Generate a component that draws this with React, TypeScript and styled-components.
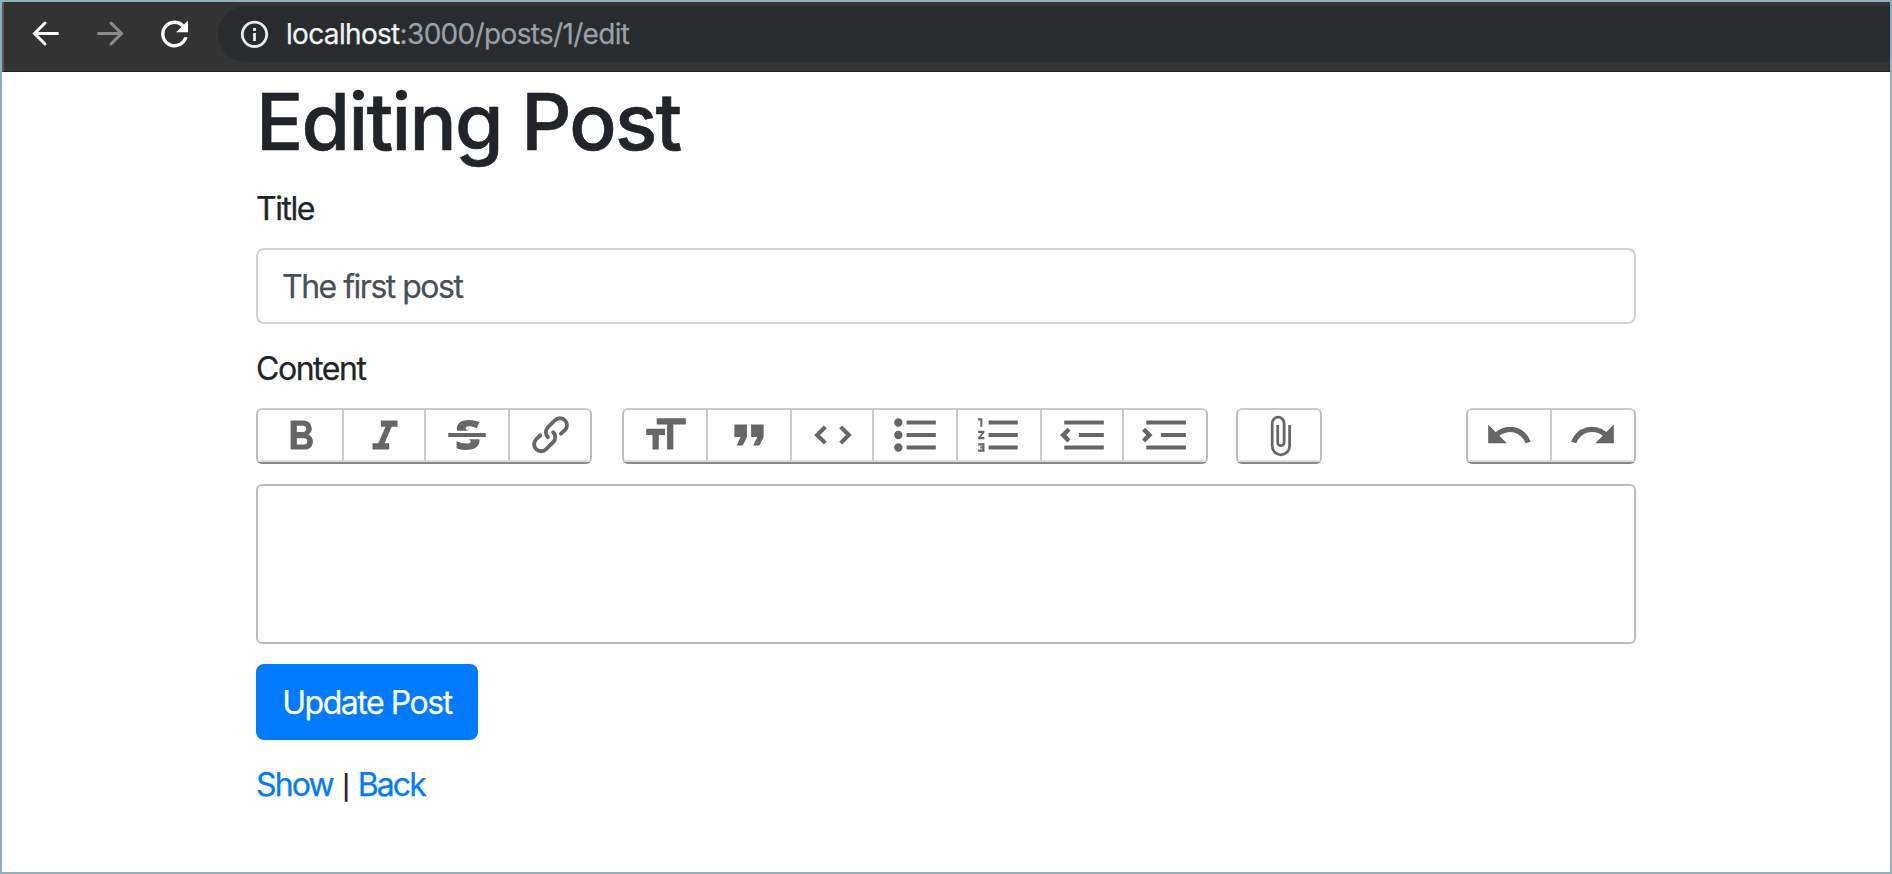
import React from 'react';
import styled, { createGlobalStyle } from 'styled-components';

const GlobalStyle = createGlobalStyle`
  *, *::before, *::after { box-sizing: border-box; }
  body {
    margin: 0;
    background: #fff;
    color: #212529;
    font-family: Inter, "Liberation Sans", sans-serif;
    font-size: 32px;
    font-weight: 400;
    line-height: 48px;
    -webkit-text-stroke: 0.25px;
  }
`;

const Window = styled.div`
  width: 1892px;
  height: 874px;
  border: 2px solid #90b0bf;
  background: #fff;
  overflow: hidden;
`;

const BrowserBar = styled.header`
  display: flex;
  align-items: flex-start;
  height: 70px;
  padding: 4px 0 0 22px;
  background: #333;
  border-left: 2px solid #5a5a5a;
  border-bottom: 1px solid #231f20;
`;

const NavIcon = styled.svg<{ $dim?: boolean }>`
  flex: none;
  width: 40px;
  height: 56px;
  margin-right: 24px;
  fill: none;
  stroke: ${p => (p.$dim ? '#8b8b8b' : '#fff')};
  stroke-width: 3;
  stroke-linecap: round;
`;

const AddressBar = styled.div`
  display: flex;
  flex: 1;
  align-items: center;
  height: 56px;
  padding-left: 22px;
  background: #292c2f;
  border-radius: 28px 0 0 28px;
`;

const InfoIcon = styled.svg`
  width: 30px;
  height: 30px;
  margin-right: 16px;
  fill: none;
  stroke: #e8eaed;
  stroke-width: 2.8;
`;

const Url = styled.span`
  color: #9aa0a6;
  font-size: 28px;
  line-height: 40px;
  letter-spacing: -0.67px;
  white-space: pre;
`;

const Host = styled.span`
  color: #f1f3f4;
`;

const Page = styled.main`
  width: 1380px;
  margin: 0 auto;
`;

const Heading = styled.h1`
  margin: 0;
  padding-top: 2px;
  font-size: 78.5px;
  font-weight: 500;
  line-height: 96px;
  letter-spacing: -1.72px;
  -webkit-text-stroke: 0.6px;
`;

const Label = styled.label<{ $top: number }>`
  display: block;
  height: 48px;
  margin: ${p => p.$top}px 0 15px;
  letter-spacing: -1.45px;
`;

const TextInput = styled.input`
  display: block;
  width: 100%;
  height: 76px;
  padding: 1px 24px 0;
  border: 2px solid #ced4da;
  border-radius: 8px;
  background: #fff;
  color: #495057;
  font: inherit;
  letter-spacing: -1.5px;
  outline: none;
`;

const Toolbar = styled.div`
  display: flex;
  height: 56px;
  margin-bottom: 20px;
`;

const Group = styled.div<{ $gap?: number }>`
  display: flex;
  margin-right: ${p => p.$gap ?? 0}px;
  border: 2px solid #bbb;
  border-top-color: #ccc;
  border-bottom-color: #888;
  border-radius: 6px;
`;

const Spacer = styled.div`
  flex: 1;
`;

const ToolButton = styled.button<{ $width: number; $inset?: number }>`
  display: flex;
  align-items: center;
  justify-content: center;
  width: ${p => p.$width}px;
  height: 52px;
  padding: 0 0 0 ${p => p.$inset ?? 0}px;
  border: 0;
  border-bottom: 2px solid #ddd;
  background: transparent;

  & + & {
    border-left: 2px solid #ccc;
  }
`;

const Glyph = styled.svg<{ $attach?: boolean }>`
  width: 50px;
  height: ${p => (p.$attach ? 44 : 50)}px;
  margin-top: ${p => (p.$attach ? 2 : 0)}px;
  fill: #666;
`;

const Editor = styled.div`
  height: 160px;
  margin-bottom: 20px;
  border: 2px solid #bbb;
  border-radius: 6px;
`;

const Submit = styled.button`
  display: block;
  width: 222px;
  height: 76px;
  padding: 2px 0 0;
  border: 0;
  border-radius: 8px;
  background: #007bff;
  color: #fff;
  font: inherit;
  letter-spacing: -1.45px;
`;

const Links = styled.nav`
  margin-top: 21px;
  letter-spacing: -1.85px;
`;

const Link = styled.a`
  color: #007bff;
  text-decoration: none;
`;

const Divider = styled.span`
  margin: 0 2px 0 2px;
  font-size: 24px;
  font-weight: 500;
  line-height: 1;
`;

type Tool = { name: string; width: number; inset?: number; path: string };

const textTools: Tool[] = [
  { name: 'Bold', width: 84, inset: 2, path: 'M15.6 11.8c1-.7 1.6-1.8 1.6-2.8a4 4 0 0 0-4-4H7v14h7c2.1 0 3.7-1.7 3.7-3.8 0-1.5-.8-2.8-2.1-3.4zM10 7.5h3a1.5 1.5 0 1 1 0 3h-3v-3zm3.5 9H10v-3h3.5a1.5 1.5 0 1 1 0 3z' },
  { name: 'Italic', width: 82, inset: 2, path: 'M10 5v3h2.2l-3.4 8H6v3h8v-3h-2.2l3.4-8H18V5h-8z' },
  { name: 'Strikethrough', width: 84, path: 'M12.73 14l.28.14c.26.15.45.3.57.44.12.14.18.3.18.5 0 .3-.15.56-.44.75-.3.2-.76.3-1.39.3A13.52 13.52 0 0 1 7 14.95v3.37a10.64 10.64 0 0 0 4.84.88c1.26 0 2.35-.19 3.28-.56.93-.37 1.64-.9 2.14-1.57s.74-1.45.74-2.32c0-.26-.02-.51-.06-.75h-5.21zm-5.5-4c-.08-.34-.12-.7-.12-1.1 0-1.29.52-2.3 1.58-3.02 1.05-.72 2.5-1.08 4.34-1.08 1.62 0 3.28.34 4.97 1l-1.3 2.93c-1.47-.6-2.73-.9-3.8-.9-.55 0-.96.08-1.2.26-.26.17-.38.38-.38.64 0 .27.16.52.48.74.17.12.53.3 1.05.53H7.23zM3 13h18v-2H3v2z' },
  { name: 'Link', width: 82, inset: 2, path: 'M9.88 13.7a4.3 4.3 0 0 1 0-6.07l3.37-3.37a4.26 4.26 0 0 1 6.07 0 4.3 4.3 0 0 1 0 6.06l-1.96 1.72a.91.91 0 1 1-1.3-1.3l1.97-1.71a2.46 2.46 0 0 0-3.48-3.48l-3.38 3.37a2.46 2.46 0 0 0 0 3.48.91.91 0 1 1-1.3 1.3zM4.25 19.46a4.3 4.3 0 0 1 0-6.07l1.93-1.9a.91.91 0 1 1 1.3 1.3l-1.93 1.9a2.46 2.46 0 0 0 3.48 3.48l3.37-3.38c.96-.96.96-2.52 0-3.48a.91.91 0 1 1 1.3-1.3 4.3 4.3 0 0 1 0 6.07l-3.38 3.38a4.26 4.26 0 0 1-6.07 0z' },
];

const blockTools: Tool[] = [
  { name: 'Heading', width: 82, path: 'M12 9v3H9v7H6v-7H3V9h9zM8 4h14v3h-6v12h-3V7H8V4z' },
  { name: 'Quote', width: 84, path: 'M6 17h3l2-4V7H5v6h3zm8 0h3l2-4V7h-6v6h3z' },
  { name: 'Code', width: 82, inset: 2, path: 'M18.2 12L15 15.2l1.4 1.4L21 12l-4.6-4.6L15 8.8l3.2 3.2zM5.8 12L9 8.8 7.6 7.4 3 12l4.6 4.6L9 15.2 5.8 12z' },
  { name: 'Bullets', width: 84, path: 'M4 4a2 2 0 1 0 0 4 2 2 0 0 0 0-4zm0 6a2 2 0 1 0 0 4 2 2 0 0 0 0-4zm0 6a2 2 0 1 0 0 4 2 2 0 0 0 0-4zm4 3h14v-2H8v2zm0-6h14v-2H8v2zm0-8v2h14V5H8z' },
  { name: 'Numbers', width: 84, path: 'M2 17h2v.5H3v1h1v.5H2v1h3v-4H2v1zm1-9h1V4H2v1h1v3zm-1 3h1.8L2 13.1v.9h3v-1H3.2L5 10.9V10H2v1zm5-6v2h14V5H7zm0 14h14v-2H7v2zm0-6h14v-2H7v2z' },
  { name: 'Decrease level', width: 82, inset: 2, path: 'M3 19h19v-2H3v2zm7-6h12v-2H10v2zm-8.3-.3l2.8 2.9L6 14.2 4 12l2-2-1.4-1.5L1 12l.7.7zM3 5v2h19V5H3z' },
  { name: 'Increase level', width: 84, path: 'M3 19h19v-2H3v2zm7-6h12v-2H10v2zM2.5 8.5L1 10l2 2-2 2.2 1.5 1.4L6 12 2.5 8.5zM3 5v2h19V5H3z' },
];

const attachPath =
  'M16.5 6v11.5a4 4 0 1 1-8 0V5a2.5 2.5 0 0 1 5 0v10.5a1 1 0 1 1-2 0V6H10v9.5a2.5 2.5 0 0 0 5 0V5a4 4 0 1 0-8 0v12.5a5.5 5.5 0 0 0 11 0V6h-1.5z';

const historyTools: Tool[] = [
  { name: 'Undo', width: 82, path: 'M12.5 8c-2.6 0-5 1-6.9 2.6L2 7v9h9l-3.6-3.6A8 8 0 0 1 20 16l2.4-.8a10.5 10.5 0 0 0-10-7.2z' },
  { name: 'Redo', width: 84, path: 'M18.4 10.6a10.5 10.5 0 0 0-16.9 4.6L4 16a8 8 0 0 1 12.7-3.6L13 16h9V7l-3.6 3.6z' },
];

function ToolGroup({ tools, gap }: { tools: Tool[]; gap?: number }) {
  return (
    <Group $gap={gap}>
      {tools.map(t => (
        <ToolButton key={t.name} type="button" aria-label={t.name} $width={t.width} $inset={t.inset}>
          <Glyph viewBox="0 0 24 24"><path d={t.path} /></Glyph>
        </ToolButton>
      ))}
    </Group>
  );
}

export default function App() {
  return (
    <Window>
      <GlobalStyle />
      <BrowserBar>
        <NavIcon viewBox="0 0 40 56">
          <path d="M31.5 27.5H9M19 17L8.5 27.5L19 38" />
        </NavIcon>
        <NavIcon viewBox="0 0 40 56" $dim>
          <path d="M8.5 27.5H31M21 17L31.5 27.5L21 38" />
        </NavIcon>
        <NavIcon viewBox="0 0 40 56">
          <path
            transform="translate(0.4 7.8) scale(1.68)"
            fill="#fff"
            stroke="none"
            d="M17.65 6.35C16.2 4.9 14.21 4 12 4c-4.42 0-7.99 3.58-7.99 8s3.57 8 7.99 8c3.73 0 6.84-2.55 7.73-6h-2.08c-.82 2.33-3.04 4-5.65 4-3.31 0-6-2.69-6-6s2.69-6 6-6c1.66 0 3.14.69 4.22 1.78L13 11h7V4z"
          />
        </NavIcon>
        <AddressBar>
          <InfoIcon viewBox="0 0 30 30">
            <circle cx="14.5" cy="15.3" r="12.2" />
            <path d="M14.5 9v3M14.5 14v8" />
          </InfoIcon>
          <Url><Host>localhost</Host>:3000/posts/1/edit</Url>
        </AddressBar>
      </BrowserBar>
      <Page>
        <Heading>Editing Post</Heading>
        <Label $top={15} htmlFor="title">Title</Label>
        <TextInput id="title" defaultValue="The first post" />
        <Label $top={21} as="div">Content</Label>
        <Toolbar>
          <ToolGroup tools={textTools} gap={30} />
          <ToolGroup tools={blockTools} gap={28} />
          <Group>
            <ToolButton type="button" aria-label="Attach files" $width={82} $inset={2}>
              <Glyph viewBox="0 0 24 24" $attach><path d={attachPath} /></Glyph>
            </ToolButton>
          </Group>
          <Spacer />
          <ToolGroup tools={historyTools} />
        </Toolbar>
        <Editor />
        <Submit type="button">Update Post</Submit>
        <Links><Link>Show</Link> <Divider>|</Divider> <Link>Back</Link></Links>
      </Page>
    </Window>
  );
}
